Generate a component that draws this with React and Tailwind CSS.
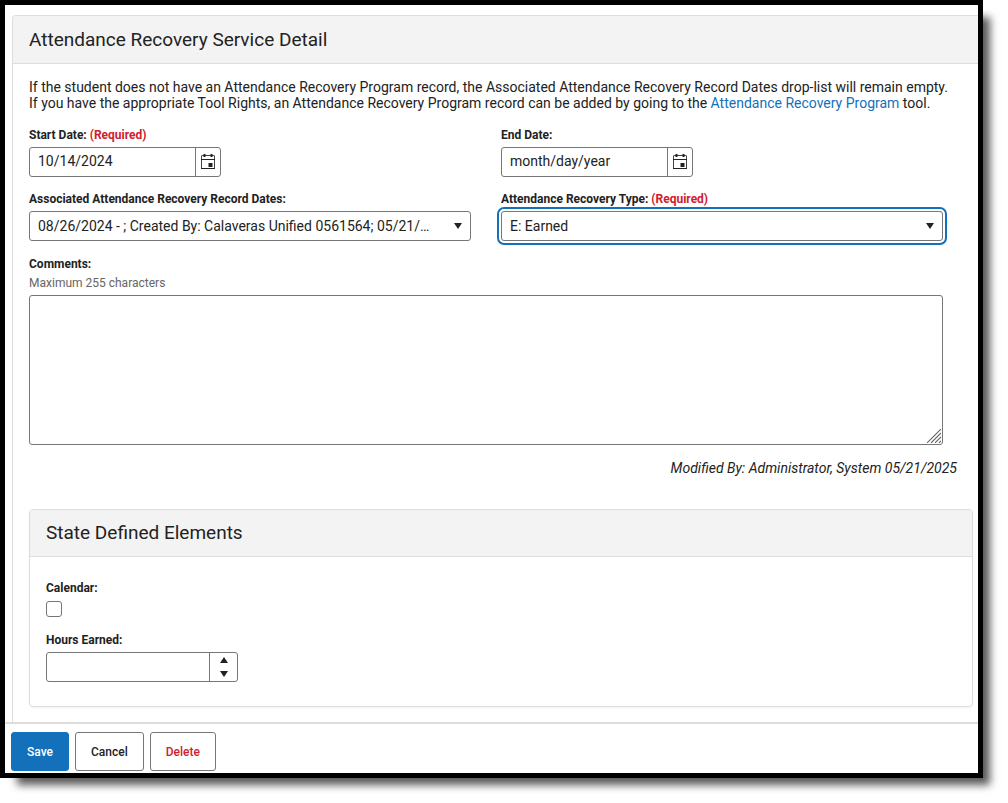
import { useState } from 'react';

const controlClass =
  'h-[30px] rounded-[3px] border border-[#767676] bg-white text-sm text-[#222222]';

function Label({ htmlFor, required, children }) {
  return (
    <label htmlFor={htmlFor} className="block text-xs leading-4 font-bold">
      {children}
      {required && <span className="text-[#d0202e]"> (Required)</span>}
    </label>
  );
}

function CalendarIcon() {
  return (
    <svg className="h-4 w-4" viewBox="0 0 16 16" fill="none" aria-hidden="true">
      <rect x="1.5" y="1.5" width="13" height="13" rx="0.5" stroke="#444444" />
      <path d="M1 5.5h14M1 14.5h14" stroke="#222222" />
      <path d="M4.5 0v3M11.5 0v3" stroke="#222222" strokeWidth="2" />
      <path d="M8.5 9h4v4h-4z" fill="#222222" />
    </svg>
  );
}

function DateField({ id, label, required, value, onChange }) {
  return (
    <div>
      <Label htmlFor={id} required={required}>{label}</Label>
      <div className={`${controlClass} mt-1 flex w-48 overflow-hidden`}>
        <input
          id={id}
          type="text"
          value={value}
          onChange={(e) => onChange(e.target.value)}
          placeholder="month/day/year"
          className="min-w-0 flex-1 px-2 pb-0.5 placeholder-[#222222] outline-none"
        />
        <button
          type="button"
          aria-label={`Choose ${label}`}
          className="flex w-[25px] items-center justify-center border-l border-[#767676]"
        >
          <CalendarIcon />
        </button>
      </div>
    </div>
  );
}

function SelectField({ id, label, required, options, active }) {
  return (
    <div>
      <Label htmlFor={id} required={required}>{label}</Label>
      <div className="relative mt-1">
        <select
          id={id}
          className={`${controlClass} block w-full appearance-none pl-2 pr-8 ${
            active ? 'outline-2 outline-offset-2 outline-[#1370bb]' : ''
          }`}
        >
          {options.map((option) => (
            <option key={option}>{option}</option>
          ))}
        </select>
        <svg
          className="pointer-events-none absolute top-3 right-2 h-1.5 w-2.5"
          viewBox="0 0 10 6"
          aria-hidden="true"
        >
          <path d="M1 0h8L5 6z" fill="#222222" />
        </svg>
      </div>
    </div>
  );
}

export default function App() {
  const [startDate, setStartDate] = useState('10/14/2024');
  const [endDate, setEndDate] = useState('');
  const [hours, setHours] = useState('');

  const step = (amount) => setHours(String(Number(hours) + amount));

  return (
    <div className="bg-white pr-[25px] pb-[25px] font-[Roboto,sans-serif] text-sm text-[#222222]">
      <div className="overflow-hidden border-5 border-black shadow-[12px_12px_8px_-5px_rgba(0,0,0,0.65)]">
        <main className="pt-2.5 pl-[7px]">
          <section className="rounded-tl border-t border-l border-[#dddddd]">
            <h1 className="rounded-tl border-b border-[#dddddd] bg-[#f3f3f3] px-4 py-2.5 text-[19px] leading-[27px]">
              Attendance Recovery Service Detail
            </h1>

            <form className="pt-[15px] pl-4 pb-[15px]">
              <p className="leading-4">
                If the student does not have an Attendance Recovery Program record, the Associated
                Attendance Recovery Record Dates drop-list will remain empty.
                <br />
                If you have the appropriate Tool Rights, an Attendance Recovery Program record can be
                added by going to the{' '}
                <a href="#program" className="text-[#1370bb]">Attendance Recovery Program</a> tool.
              </p>

              <div className="mt-4 mr-[35px] grid grid-cols-2 gap-x-[30px] gap-y-3.5">
                <DateField id="startDate" label="Start Date:" required value={startDate} onChange={setStartDate} />
                <DateField id="endDate" label="End Date:" value={endDate} onChange={setEndDate} />
                <SelectField
                  id="recordDates"
                  label="Associated Attendance Recovery Record Dates:"
                  options={['08/26/2024 - ; Created By: Calaveras Unified 0561564; 05/21/…']}
                />
                <SelectField
                  id="recoveryType"
                  label="Attendance Recovery Type:"
                  required
                  active
                  options={['E: Earned']}
                />
              </div>

              {/* Comments */}
              <div className="mt-[15px] mr-[35px]">
                <Label htmlFor="comments">Comments:</Label>
                <p id="commentsHelp" className="mt-[3px] text-xs leading-4 text-[#666666]">
                  Maximum 255 characters
                </p>
                <div className="relative mt-1">
                  <textarea
                    id="comments"
                    maxLength={255}
                    aria-describedby="commentsHelp"
                    className="block h-[150px] w-full resize-none rounded-[3px] border border-[#767676] bg-white p-2"
                  />
                  <svg
                    className="pointer-events-none absolute right-0.5 bottom-0.5 h-3.5 w-3.5"
                    viewBox="0 0 14 14"
                    aria-hidden="true"
                  >
                    <path d="M0 14L14 0M4 14L14 4M8 14L14 8M12 14L14 12" stroke="#666666" strokeWidth="1.1" />
                  </svg>
                </div>
              </div>

              <p className="mt-[13px] mr-[21px] text-right leading-5 italic">
                Modified By: Administrator, System 05/21/2025
              </p>

              <section className="mt-[31px] mr-[5px] rounded border border-[#dddddd] shadow-xs">
                <h2 className="rounded-t border-b border-[#dddddd] bg-[#f3f3f3] px-4 py-2.5 text-[19px] leading-[26px]">
                  State Defined Elements
                </h2>
                <div className="px-4 pt-[23px] pb-6">
                  <Label htmlFor="calendar">Calendar:</Label>
                  <input
                    id="calendar"
                    type="checkbox"
                    className="mt-[5px] block h-4 w-4 appearance-none rounded-[3px] border border-[#767676] bg-white checked:bg-[#1370bb]"
                  />
                  <div className="mt-[15px]">
                    <Label htmlFor="hours">Hours Earned:</Label>
                    <div className={`${controlClass} mt-1 flex w-48 overflow-hidden`}>
                      <input
                        id="hours"
                        type="text"
                        inputMode="decimal"
                        value={hours}
                        onChange={(e) => setHours(e.target.value)}
                        className="min-w-0 flex-1 px-2 outline-none"
                      />
                      <div className="flex w-7 flex-col border-l border-[#767676]">
                        <button
                          type="button"
                          aria-label="Increase hours"
                          onClick={() => step(1)}
                          className="flex flex-1 items-center justify-center"
                        >
                          <svg className="h-1.5 w-2" viewBox="0 0 8 6" aria-hidden="true">
                            <path d="M0 6h8L4 0z" fill="#222222" />
                          </svg>
                        </button>
                        <button
                          type="button"
                          aria-label="Decrease hours"
                          onClick={() => step(-1)}
                          className="flex flex-1 items-center justify-center"
                        >
                          <svg className="h-1.5 w-2" viewBox="0 0 8 6" aria-hidden="true">
                            <path d="M0 0h8L4 6z" fill="#222222" />
                          </svg>
                        </button>
                      </div>
                    </div>
                  </div>
                </div>
              </section>
            </form>
          </section>
        </main>

        {/* Action bar */}
        <footer className="flex gap-1.5 border-t-2 border-[#dddddd] px-1.5 pt-2 pb-0.5 text-xs font-medium">
          <button type="button" className="h-[39px] rounded-[3px] border border-[#1370bb] bg-[#1370bb] px-[15px] text-white">
            Save
          </button>
          <button type="button" className="h-[39px] rounded-[3px] border border-[#767676] bg-white px-[15px]">
            Cancel
          </button>
          <button type="button" className="h-[39px] rounded-[3px] border border-[#767676] bg-white px-[15px] text-[#d0202e]">
            Delete
          </button>
        </footer>
      </div>
    </div>
  );
}
